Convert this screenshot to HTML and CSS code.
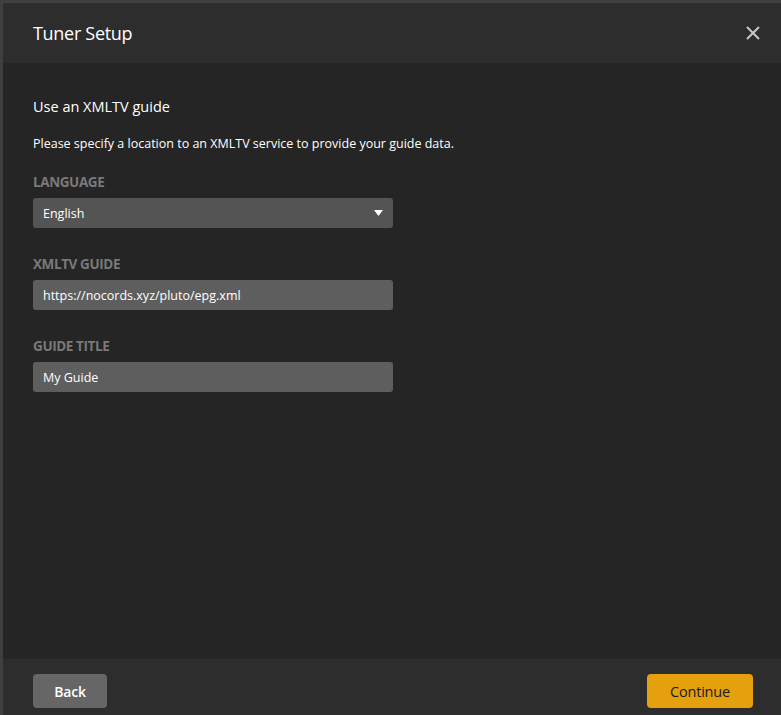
FILE: index.html
```html
<!DOCTYPE html>
<html lang="en">
<head>
  <meta charset="UTF-8">
  <meta name="viewport" content="width=device-width,initial-scale=1.0">
  <title>Tuner Setup</title>
  <link rel="stylesheet" href="styles.css">
</head>
<body>

  <div class="modal">
    <div class="modal-header">
      <h1>Tuner Setup</h1>
      <button class="close-btn" aria-label="Close">
        <svg width="14" height="14" viewBox="0 0 14 14">
          <path d="M1 1 L13 13 M13 1 L1 13" stroke="#c8c8c8" stroke-width="2" fill="none"/>
        </svg>
      </button>
    </div>

    <div class="modal-body">
      <h2>Use an XMLTV guide</h2>
      <p>Please specify a location to an XMLTV service to provide your guide data.</p>

      <div class="field">
        <label>LANGUAGE</label>
        <div class="select">
          <span>English</span>
          <svg width="9" height="6" viewBox="0 0 9 6"><path d="M0 0 L9 0 L4.5 6 Z" fill="#fff"/></svg>
        </div>
      </div>

      <div class="field">
        <label>XMLTV GUIDE</label>
        <input class="text-input" type="text" value="https://nocords.xyz/pluto/epg.xml">
      </div>

      <div class="field">
        <label>GUIDE TITLE</label>
        <input class="text-input" type="text" value="My Guide">
      </div>
    </div>

    <div class="modal-footer">
      <button class="btn btn-back">Back</button>
      <button class="btn btn-continue">Continue</button>
    </div>
  </div>

</body>
</html>
```

FILE: styles.css
```css
html, body {
  height: 100%;
}

body {
  margin: 0;
  padding: 3px 0 0 3px;
  box-sizing: border-box;
  background-color: #3f3f3f;
  font-family: "Open Sans", "Noto Sans", Arial, sans-serif;
  color: #ffffff;
  overflow: hidden;
}

.modal {
  height: 100%;
  display: flex;
  flex-direction: column;
  background-color: #252525;
}

.modal-header {
  height: 60px;
  flex-shrink: 0;
  display: flex;
  align-items: center;
  justify-content: space-between;
  padding: 0 21px 0 30px;
  background-color: #2d2d2d;
}

.modal-header h1 {
  margin: 0;
  font-size: 18px;
  font-weight: 400;
  letter-spacing: -0.3px;
}

.close-btn {
  background: none;
  border: none;
  padding: 0;
  display: flex;
  cursor: pointer;
}

.modal-body {
  flex: 1;
  padding: 34px 30px 0;
}

.modal-body h2 {
  margin: 0 0 17px;
  font-size: 14.5px;
  font-weight: 400;
  line-height: 20px;
}

.modal-body p {
  margin: 0 0 19px;
  font-size: 12.5px;
  line-height: 20px;
}

.field {
  margin-bottom: 27px;
}

.field label {
  display: block;
  margin-bottom: 7px;
  font-size: 13.5px;
  font-weight: 700;
  line-height: 18px;
  color: #797979;
  letter-spacing: -0.4px;
}

.select,
.text-input {
  box-sizing: border-box;
  width: 360px;
  height: 30px;
  padding: 0 10px;
  border: none;
  border-radius: 3px;
  font-family: inherit;
  font-size: 12.5px;
  color: #ffffff;
}

.select {
  display: flex;
  align-items: center;
  justify-content: space-between;
  padding-right: 10px;
  background-color: #545454;
}

.text-input {
  display: block;
  background-color: #5e5e5e;
  outline: none;
}

.modal-footer {
  height: 56px;
  flex-shrink: 0;
  display: flex;
  align-items: flex-start;
  justify-content: space-between;
  padding: 15px 28px 0 30px;
  box-sizing: border-box;
  background-color: #2d2d2d;
}

.btn {
  height: 34px;
  border: none;
  border-radius: 4px;
  font-family: inherit;
  font-size: 14px;
  font-weight: 600;
  letter-spacing: -0.2px;
  cursor: pointer;
}

.btn-back {
  width: 74px;
  background-color: #666666;
  color: #ffffff;
}

.btn-continue {
  width: 106px;
  background-color: #e5a00d;
  color: #1a1a1a;
  font-size: 14.5px;
  font-weight: 400;
}
```
